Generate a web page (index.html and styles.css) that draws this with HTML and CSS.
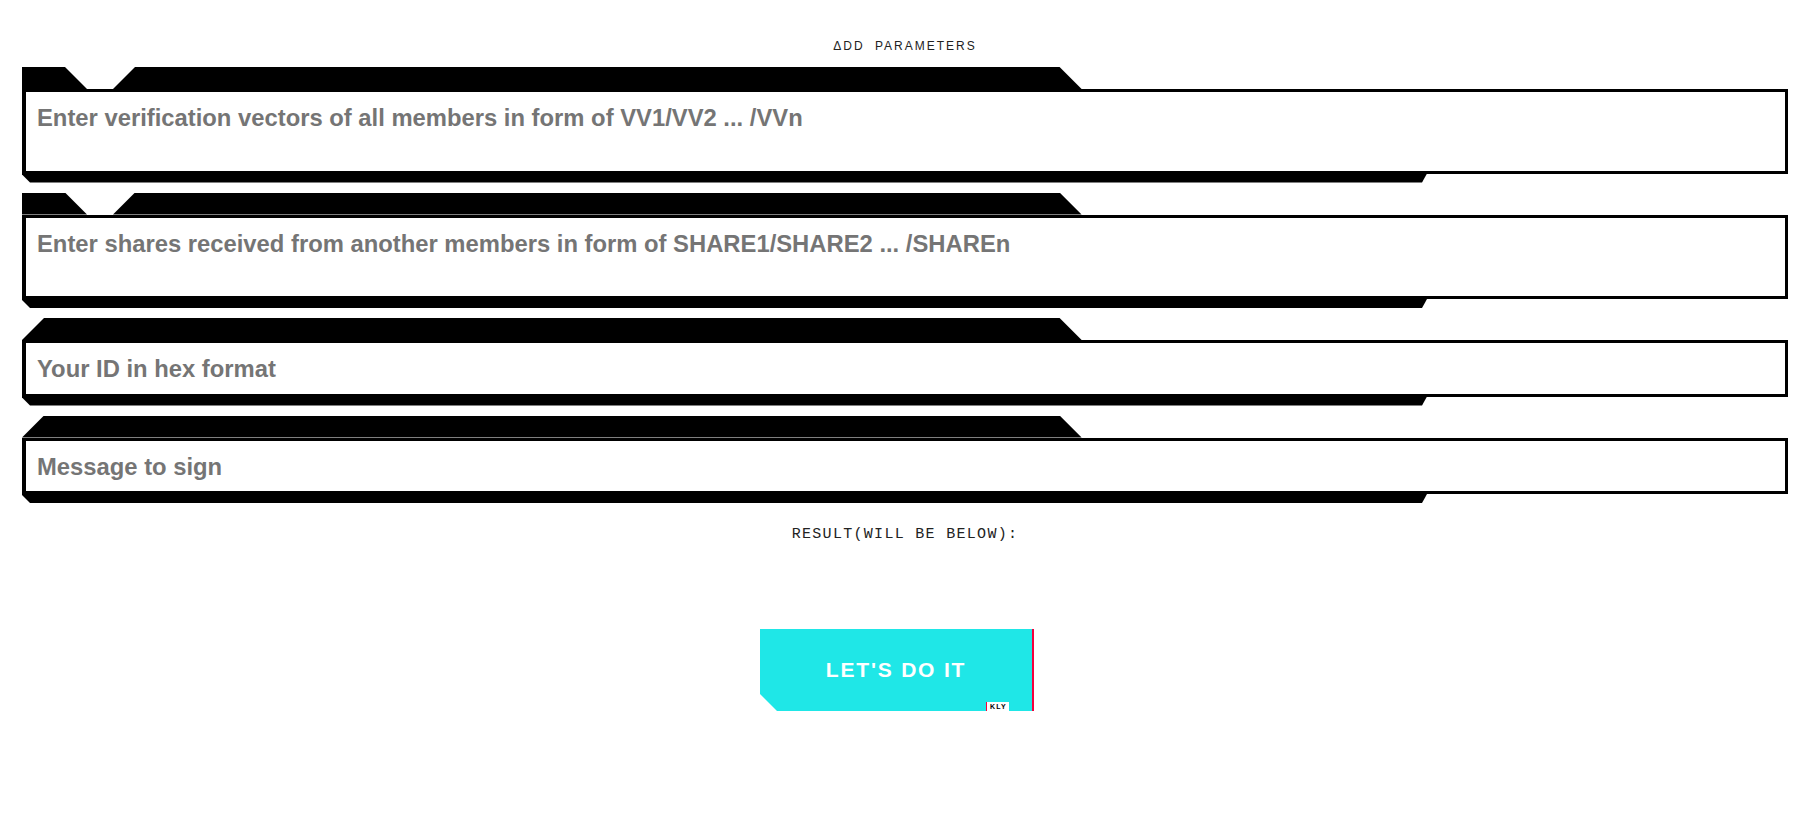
FILE: index.html
```html
<!DOCTYPE html>
<html lang="en">
<head>
<meta charset="utf-8">
<title>Sign message</title>
<link rel="stylesheet" href="styles.css">
</head>
<body>
<main class="page">
  <h1 class="title">ΔDD PARAMETERS</h1>
  <form class="fields">
    <div class="field">
      <div class="tab tab-notch"></div>
      <textarea class="entry entry-area" placeholder="Enter verification vectors of all members in form of VV1/VV2 ... /VVn"></textarea>
      <div class="foot"></div>
    </div>
    <div class="field">
      <div class="tab tab-notch"></div>
      <textarea class="entry entry-area" placeholder="Enter shares received from another members in form of SHARE1/SHARE2 ... /SHAREn"></textarea>
      <div class="foot"></div>
    </div>
    <div class="field">
      <div class="tab tab-chamfer"></div>
      <input class="entry entry-line" type="text" placeholder="Your ID in hex format">
      <div class="foot"></div>
    </div>
    <div class="field">
      <div class="tab tab-chamfer"></div>
      <input class="entry entry-line" type="text" placeholder="Message to sign">
      <div class="foot"></div>
    </div>
  </form>
  <p class="result">RESULT(WILL BE BELOW):</p>
  <div class="actions">
    <button class="go" type="button">LET'S DO IT<span class="tag">KLY</span></button>
  </div>
</main>
</body>
</html>
```
FILE: styles.css
```css
* { box-sizing: border-box; }

html, body {
  margin: 0;
  background: #ffffff;
}

.page {
  padding: 38px 23px 0 22px;
  font-family: "Liberation Sans", Arial, sans-serif;
}

.title {
  margin: 0 0 13px;
  font-size: 12px;
  line-height: 16px;
  font-weight: 400;
  letter-spacing: 2px;
  word-spacing: 5px;
  text-align: center;
  color: #222;
}

.fields {
  display: flex;
  flex-direction: column;
  gap: 10px;
  margin: 0;
}

.field {
  display: flex;
  flex-direction: column;
}

.tab {
  width: 60%;
  height: 22px;
  background: #000;
}

.tab-notch {
  clip-path: polygon(0 0, 43px 0, 65px 100%, 91px 100%, 113px 0, calc(100% - 22px) 0, 100% 100%, 0 100%);
}

.tab-chamfer {
  clip-path: polygon(22px 0, calc(100% - 22px) 0, 100% 100%, 0 100%);
}

.entry {
  display: block;
  width: 100%;
  margin: 0;
  border: 3px solid #000;
  border-left-width: 4px;
  border-radius: 0;
  background: #fff;
  font-family: "Liberation Sans", Arial, sans-serif;
  font-size: 23.8px;
  font-weight: 700;
  color: #333;
  outline: none;
}

.entry::placeholder {
  color: #757575;
  opacity: 1;
}

.entry-area {
  height: 84.5px;
  padding: 12px 11px 0;
  resize: none;
  overflow: hidden;
  line-height: normal;
}

.entry-line {
  height: 56.5px;
  padding: 2px 11px 0;
}

.foot {
  width: 79.56%;
  height: 9px;
  background: #000;
  clip-path: polygon(0 0, 100% 0, calc(100% - 5px) 100%, 8px 100%, 0 calc(100% - 8px));
}

.result {
  margin: 23px 0 0;
  font-family: "Liberation Mono", "Courier New", monospace;
  font-size: 15px;
  line-height: 18px;
  letter-spacing: 1.3px;
  text-align: center;
  color: #222;
}

.actions {
  display: flex;
  justify-content: center;
  padding-right: 16px;
  margin-top: 85px;
}

.go {
  position: relative;
  width: 274px;
  height: 82px;
  border: 0;
  border-right: 2px solid #f5003d;
  background: #1fe7e7;
  background-clip: padding-box;
  color: #fff;
  font-family: "Liberation Sans", Arial, sans-serif;
  font-size: 21px;
  font-weight: 700;
  letter-spacing: 1.8px;
  padding: 0;
  clip-path: polygon(0 0, 100% 0, 100% 100%, 17px 100%, 0 calc(100% - 17px));
  cursor: pointer;
}

.tag {
  position: absolute;
  right: 23px;
  bottom: 0;
  height: 9px;
  padding: 0 2px 0 3px;
  background: #fff;
  border-left: 1px solid #f5003d;
  color: #000;
  font-size: 7px;
  line-height: 9px;
  font-weight: 700;
  letter-spacing: 1.2px;
}
```
